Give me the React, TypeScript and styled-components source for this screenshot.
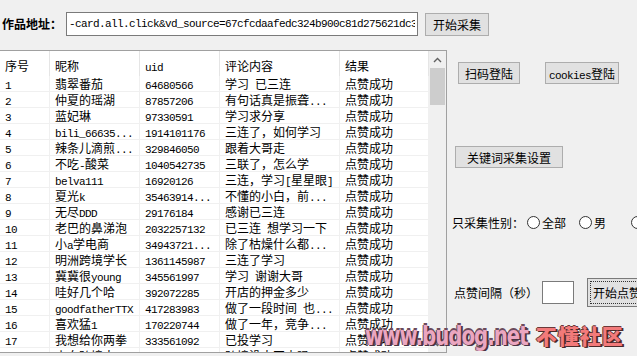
import React from "react";
import styled, { createGlobalStyle } from "styled-components";

const GlobalStyle = createGlobalStyle`
  html, body {
    margin: 0;
    padding: 0;
    background: #f0f0f0;
  }
  body {
    font-family: "Noto Sans CJK SC", "Liberation Sans", sans-serif;
    font-size: 12px;
    color: #000;
  }
`;

const Window = styled.div`
  width: 637px;
  height: 356px;
  overflow: hidden;
  position: relative;
  display: grid;
  grid-template-columns: 447px 1fr;
  grid-template-rows: 50px 1fr;
`;

const Latin = styled.span`
  font-family: "Liberation Mono", monospace;
  font-size: 11px;
  letter-spacing: -0.6px;
`;

const TopBar = styled.div`
  grid-column: 1 / -1;
  display: flex;
  align-items: flex-start;
  padding: 12px 0 0 2px;
`;

const AddressLabel = styled.div`
  width: 64px;
  line-height: 24px;
  font-weight: 700;
  font-size: 12px;
`;

const UrlInput = styled.input`
  box-sizing: border-box;
  width: 352px;
  height: 24px;
  margin: 0;
  padding: 0 2px;
  border: 1px solid #7a7a7a;
  background: #fff;
  font-family: "Liberation Mono", monospace;
  font-size: 11px;
  letter-spacing: -0.6px;
  color: #000;
  outline: none;
`;

const Button = styled.button<{ $w: number; $h?: number; $focus?: boolean }>`
  box-sizing: border-box;
  width: ${(p) => p.$w}px;
  height: ${(p) => p.$h ?? 22}px;
  flex: none;
  margin: 0;
  padding: 0;
  background: #e1e1e1;
  border: 1px solid ${(p) => (p.$focus ? "#7a7a7a" : "#adadad")};
  font-family: "Noto Sans CJK SC", sans-serif;
  font-size: 12px;
  color: #000;
  outline: ${(p) => (p.$focus ? "1px dotted #333" : "none")};
  outline-offset: -4px;
  white-space: nowrap;
  overflow: hidden;
`;

const StartButton = styled(Button)`
  margin: 1px 0 0 7px;
`;

const TablePanel = styled.div`
  grid-row: 2;
  grid-column: 1;
  height: 303px;
  box-sizing: border-box;
  border-top: 1px solid #a0a0a0;
  border-right: 1px solid #a0a0a0;
  border-bottom: 1px solid #a0a0a0;
  display: flex;
  background: #fff;
  overflow: hidden;
`;

const List = styled.div`
  width: 429px;
  overflow: hidden;
`;

const COLUMNS = "50px 90px 80px 120px 89px";

const HeaderRow = styled.div`
  display: grid;
  grid-template-columns: ${COLUMNS};
  height: 25px;
`;

const HeaderCell = styled.div`
  padding: 4px 0 0 5px;
  line-height: 21px;
  border-right: 1px solid #e5e5e5;
  white-space: nowrap;
  overflow: hidden;
`;

const Row = styled.div`
  display: grid;
  grid-template-columns: ${COLUMNS};
  height: 16px;
  box-sizing: border-box;
  border-bottom: 1px solid #f0f0f0;
`;

const Cell = styled.div`
  padding-left: 5px;
  line-height: 15px;
  border-right: 1px solid #f0f0f0;
  white-space: nowrap;
  overflow: hidden;
`;

const ScrollBar = styled.div`
  width: 17px;
  background: #f0f0f0;
  display: flex;
  flex-direction: column;
`;

const ArrowBox = styled.div`
  height: 17px;
  display: flex;
  align-items: center;
  justify-content: center;
`;

const Thumb = styled.div`
  height: 37px;
  margin: 0 1px;
  background: #cdcdcd;
`;

const Track = styled.div`
  flex: 1;
`;

const RightPanel = styled.div`
  grid-row: 2;
  grid-column: 2;
  display: flex;
  flex-direction: column;
  align-items: flex-start;
  padding-left: 8px;
`;

const LoginRow = styled.div`
  display: flex;
  gap: 25px;
  margin: 12px 0 0 3px;
`;

const KeywordButton = styled(Button)`
  margin-top: 62px;
`;

const GenderRow = styled.div`
  display: flex;
  align-items: center;
  height: 16px;
  margin: 46px 0 0 -3px;
  white-space: nowrap;
`;

const GenderLabel = styled.span`
  margin-right: 3px;
`;

const RadioOption = styled.label`
  width: 52px;
  flex: none;
  display: flex;
  align-items: center;
  gap: 2px;
`;

const RadioCircle = styled.span`
  box-sizing: border-box;
  width: 13px;
  height: 13px;
  border: 1px solid #333;
  border-radius: 50%;
  background: #fff;
`;

const IntervalRow = styled.div`
  display: flex;
  align-items: center;
  height: 29px;
  margin: 48px 0 0 -1px;
  white-space: nowrap;
`;

const IntervalLabel = styled.span`
  width: 84px;
`;

const SmallInput = styled.div`
  box-sizing: border-box;
  width: 32px;
  height: 23px;
  margin-left: 4px;
  border: 1px solid #7a7a7a;
  background: #fff;
`;

const LikeButton = styled(Button)`
  margin-left: 13px;
  text-align: left;
  padding-left: 5px;
`;

const Watermark = styled.div`
  position: absolute;
  left: 365px;
  top: 320px;
  display: flex;
  align-items: center;
  gap: 8px;
  white-space: nowrap;
  pointer-events: none;
`;

const MarkSite = styled.span`
  display: inline-block;
  font-family: "DejaVu Sans Condensed", "DejaVu Sans", sans-serif;
  font-weight: 700;
  font-size: 22px;
  letter-spacing: -1px;
  color: #eba6c0;
  transform: scaleY(1.2);
  text-shadow: 1px 1px 0 #4b3342, 2px 1px 0 #4b3342, -1px 0 0 #6b4b5c,
    0 -1px 0 #6b4b5c;
`;

const MarkName = styled.span`
  display: inline-block;
  font-family: "Noto Sans CJK SC", sans-serif;
  font-weight: 900;
  font-size: 21px;
  letter-spacing: 1px;
  color: #f27a7a;
  text-shadow: 1px 1px 0 #4b2a2a, 2px 1px 0 #4b2a2a, -1px 0 0 #6b3a3a,
    0 -1px 0 #6b3a3a;
`;

const Text = ({ children }: { children: string }) => (
  <>
    {children
      .split(/([\x00-\x7f]+)/)
      .filter(Boolean)
      .map((part, i) =>
        /^[\x00-\x7f]+$/.test(part) ? <Latin key={i}>{part}</Latin> : part
      )}
  </>
);

const rows: [string, string, string][] = [
  ["翡翠番茄", "64680566", "学习 已三连"],
  ["仲夏的瑶湖", "87857206", "有句话真是振聋..."],
  ["蓝妃琳", "97330591", "学习求分享"],
  ["bili_66635...", "1914101176", "三连了，如何学习"],
  ["辣条儿滴煎...", "329846050", "跟着大哥走"],
  ["不吃-酸菜", "1040542735", "三联了，怎么学"],
  ["belva111", "16920126", "三连，学习[星星眼]"],
  ["夏光k", "35463914...", "不懂的小白，前..."],
  ["无尽DDD", "29176184", "感谢已三连"],
  ["老巴的鼻涕泡", "2032257132", "已三连 想学习一下"],
  ["小a学电商", "34943721...", "除了枯燥什么都..."],
  ["明洲跨境学长", "1361145987", "三连了学习"],
  ["冀冀很young", "345561997", "学习 谢谢大哥"],
  ["哇好几个哈", "392072285", "开店的押金多少"],
  ["goodfatherTTX", "417283983", "做了一段时间 也..."],
  ["喜欢猛1", "170220744", "做了一年，竞争..."],
  ["我想给你两拳", "333561092", "已投学习"],
  ["小白跨境人", "208813377", "跨境没人回去吗"],
];

const Chevron = ({ down }: { down?: boolean }) => (
  <svg width="9" height="6" viewBox="0 0 9 6">
    <path
      d={down ? "M1 1 L4.5 4.5 L8 1" : "M1 5 L4.5 1.5 L8 5"}
      fill="none"
      stroke="#606060"
      strokeWidth="1.4"
    />
  </svg>
);

export default function App() {
  return (
    <>
      <GlobalStyle />
      <Window>
        <TopBar>
          <AddressLabel>作品地址：</AddressLabel>
          <UrlInput
            readOnly
            value="-card.all.click&vd_source=67cfcdaafedc324b900c81d275621dc3"
          />
          <StartButton $w={64} $h={23}>
            开始采集
          </StartButton>
        </TopBar>

        <TablePanel>
          <List>
            <HeaderRow>
              <HeaderCell>序号</HeaderCell>
              <HeaderCell>昵称</HeaderCell>
              <HeaderCell>
                <Text>uid</Text>
              </HeaderCell>
              <HeaderCell>评论内容</HeaderCell>
              <HeaderCell>结果</HeaderCell>
            </HeaderRow>
            {rows.map(([name, uid, comment], i) => (
              <Row key={i}>
                <Cell>
                  <Text>{String(i + 1)}</Text>
                </Cell>
                <Cell>
                  <Text>{name}</Text>
                </Cell>
                <Cell>
                  <Text>{uid}</Text>
                </Cell>
                <Cell>
                  <Text>{comment}</Text>
                </Cell>
                <Cell>点赞成功</Cell>
              </Row>
            ))}
          </List>
          <ScrollBar>
            <ArrowBox>
              <Chevron />
            </ArrowBox>
            <Thumb />
            <Track />
            <ArrowBox>
              <Chevron down />
            </ArrowBox>
          </ScrollBar>
        </TablePanel>

        <RightPanel>
          <LoginRow>
            <Button $w={62}>扫码登陆</Button>
            <Button $w={74}>
              <Text>cookies登陆</Text>
            </Button>
          </LoginRow>
          <KeywordButton $w={108}>关键词采集设置</KeywordButton>
          <GenderRow>
            <GenderLabel>只采集性别：</GenderLabel>
            <RadioOption>
              <RadioCircle />
              全部
            </RadioOption>
            <RadioOption>
              <RadioCircle />男
            </RadioOption>
            <RadioOption>
              <RadioCircle />女
            </RadioOption>
          </GenderRow>
          <IntervalRow>
            <IntervalLabel>点赞间隔（秒）</IntervalLabel>
            <SmallInput />
            <LikeButton $w={64} $h={29} $focus>
              开始点赞
            </LikeButton>
          </IntervalRow>
        </RightPanel>

        <Watermark>
          <MarkSite>www.budog.net</MarkSite>
          <MarkName>不懂社区</MarkName>
        </Watermark>
      </Window>
    </>
  );
}
